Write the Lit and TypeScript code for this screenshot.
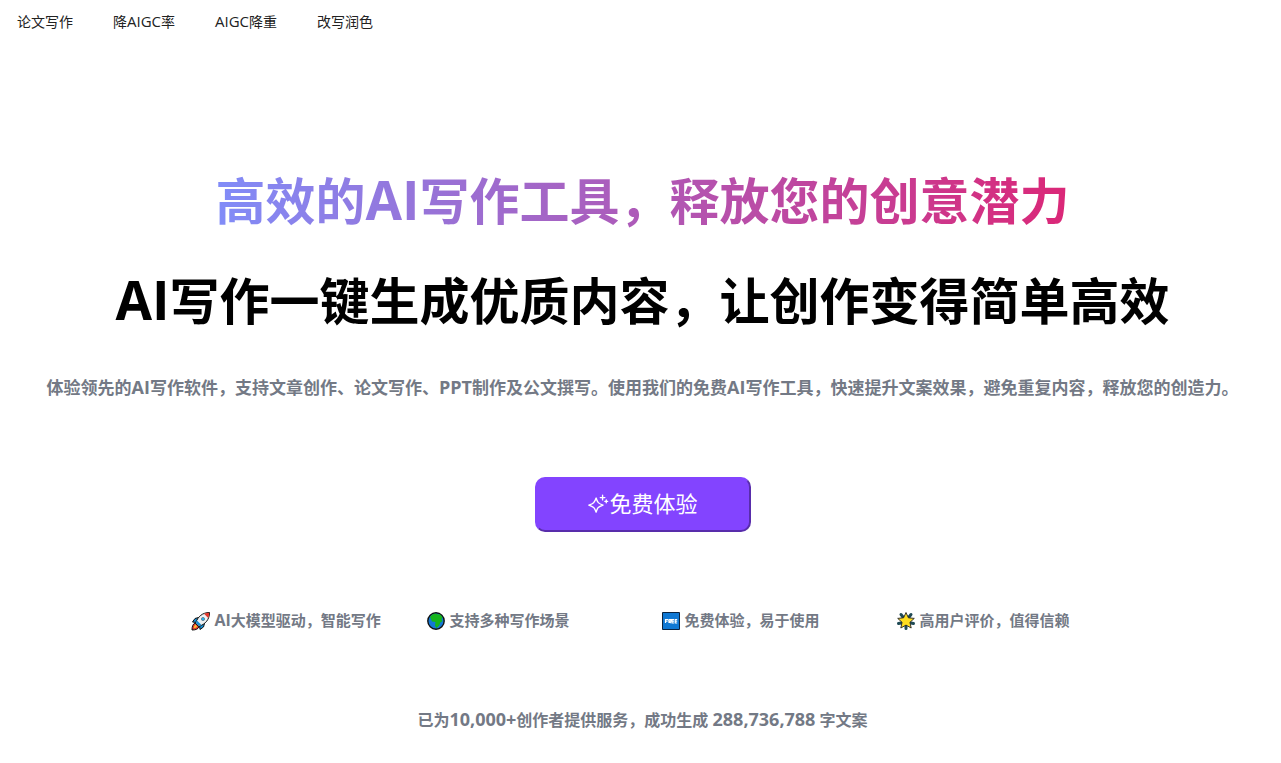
import { LitElement, html, css, svg } from "lit";
import { customElement } from "lit/decorators.js";

const rocket = svg`<svg viewBox="0 0 20 20" aria-hidden="true">
  <path d="M7.500 6.500 4 7.500 1.500 11l4 .5zM13.500 12.500 12.500 16 9 18.500l-.5-4z" fill="#1690d8" stroke="#111" stroke-linejoin="round"/>
  <path d="M4 12c-2 1-3 3-3 7 4 0 6-1 7-3z" fill="#e5382c" stroke="#111" stroke-linejoin="round"/>
  <path d="M4.500 13.500c-1 .8-1.600 2-1.700 3.700 1.700-.1 2.700-.7 3.400-1.700z" fill="#ffc02e"/>
  <path d="M4.500 12C7 5.500 11.500 1.500 18.500 1.500 18.500 8.500 14.500 13 8 15.500z" fill="#eef1f3" stroke="#111" stroke-linejoin="round"/>
  <path d="M4.900 12 6 9.500l4.500 4.500-2.300 1z" fill="#1690d8"/>
  <path d="M13 2.800c1.700-.7 3.500-1 5.200-1 0 1.800-.3 3.600-1 5.200z" fill="#e5382c"/>
  <circle cx="12" cy="8" r="1.600" fill="#27b4f0" stroke="#456" stroke-width=".6"/>
</svg>`;
const globe = svg`<svg viewBox="0 0 20 20" aria-hidden="true">
  <circle cx="10" cy="10" r="8.200" fill="#1478d4" stroke="#111" stroke-width="1.400"/>
  <path d="M4 6C6 3 8 2.700 10 2.700l2 .8 2-.2 2.500 3-1 2 1 2-2 1-1.500 3.500L10.500 17 9 14.500 9.500 11 6 10.500z" fill="#16b51c"/>
</svg>`;
const free = svg`<svg viewBox="0 0 20 20" aria-hidden="true">
  <path d="M1.500 1.500h17v17h-17z" fill="#0f78d4" stroke="#0a2340"/>
  <path d="M4.500 12V8.500h2.500M4.500 10.200h2M8 12V8.500h1.800v1.700H8L9.800 12M13 8.500h-2V12h2M11 10.200h2M16.200 8.500h-2V12h2M14.200 10.200h2" fill="none" stroke="#fff" stroke-width="1.200"/>
</svg>`;
const star = svg`<svg viewBox="0 0 20 20" aria-hidden="true">
  <path d="M5 3.500 7 6M15 3.500 13 6M2.500 12.500 5 12M17.500 12.500 15 12M10 17.500V15" stroke="#1f4a55" stroke-width="3" stroke-linecap="round"/>
  <path d="M10 1.500l2.400 5.300 5.900.6-4.400 3.900 1.300 5.700-5.200-2.900L4.800 17l1.300-5.700-4.400-3.900 5.900-.6z" fill="#ffdd1f" stroke="#222" stroke-width=".9" stroke-linejoin="round"/>
</svg>`;
const sparkles = svg`<svg viewBox="0 0 24 24" fill="none" stroke="#fff" stroke-width="1.500" stroke-linecap="round" stroke-linejoin="round" aria-hidden="true">
  <path d="M10 5.500c1.200 4.800 2.500 6 7.500 7.700-5 1.700-6.300 3-7.500 7.700-1.700-4.700-3-6-8-7.700 5-1.700 6.300-2.900 8-7.700zM17 2.500v5M14.500 5h5M21 7.700v3M19.500 9.200h3"/>
</svg>`;

@customElement("app-root")
export class AppRoot extends LitElement {
  static styles = css`
    :host { display: block; background: #fff; color: #000; font-family: "Open Sans", "Noto Sans CJK SC", sans-serif; }
    nav { display: flex; flex-wrap: wrap; gap: 0 40px; padding: 12px 17px; font-size: 14px; line-height: 20px; }
    nav a { color: #222; text-decoration: none; }
    nav .latin { font-size: 15px; line-height: 1; }
    main { display: flex; flex-direction: column; align-items: center; padding: 107px 16px 0 20px; text-align: center; }
    h1 { margin: 0; font-size: 50px; line-height: 100px; font-weight: 700; }
    .line { display: block; }
    h1 .latin { font-size: 53px; line-height: 1; }
    .gradient { width: fit-content; margin: 0 auto; color: transparent; background: linear-gradient(to right, #818cf8, #db2777); background-clip: text; -webkit-background-clip: text; }
    p { margin: 0; color: #737985; font-weight: 700; line-height: 24px; }
    .lead { padding-top: 25px; font-size: 17px; }
    .lead .latin { font-size: 18px; line-height: 1; }
    button { display: flex; align-items: center; justify-content: center; width: 216px; height: 55px; margin: 77px 0 0; padding: 0 0 4px; border: 2px outset #8344ff; border-radius: 10px; background: #8344ff; color: #fff; font: 22px/32px "Open Sans", "Noto Sans CJK SC", sans-serif; }
    button svg { width: 22px; height: 22px; padding-top: 2px; }
    ul { display: grid; grid-template-columns: repeat(4, minmax(0, 235px)); justify-content: center; align-self: stretch; margin: 76px 0 0; padding: 0 0 0 36px; list-style: none; color: #737985; font-size: 15px; font-weight: 700; line-height: 24px; }
    li { display: flex; align-items: center; gap: 4px; }
    li svg { flex: none; width: 20px; height: 20px; padding-top: 1px; }
    li .latin { font-size: 16px; line-height: 1; }
    .count { padding-top: 76px; font-size: 16px; }
    .count .latin { font-size: 18px; line-height: 1; }
  `;
  render() {
    const latin = (text: string) => html`<span class="latin">${text}</span>`;
    return html`
      <nav><a href="#">论文写作</a><a href="#">降${latin("AIGC")}率</a><a href="#">${latin("AIGC")}降重</a><a href="#">改写润色</a></nav>
      <main>
        <h1><span class="line gradient">高效的${latin("AI")}写作工具，释放您的创意潜力</span><span class="line">${latin("AI")}写作一键生成优质内容，让创作变得简单高效</span></h1>
        <p class="lead">体验领先的${latin("AI")}写作软件，支持文章创作、论文写作、${latin("PPT")}制作及公文撰写。使用我们的免费${latin("AI")}写作工具，快速提升文案效果，避免重复内容，释放您的创造力。</p>
        <button type="button">${sparkles}免费体验</button>
        <ul>
          <li>${rocket}<span>${latin("AI")}大模型驱动，智能写作</span></li>
          <li>${globe}<span>支持多种写作场景</span></li>
          <li>${free}<span>免费体验，易于使用</span></li>
          <li>${star}<span>高用户评价，值得信赖</span></li>
        </ul>
        <p class="count">已为${latin("10,000+")}创作者提供服务，成功生成 ${latin("288,736,788")} 字文案</p>
      </main>`;
  }
}
